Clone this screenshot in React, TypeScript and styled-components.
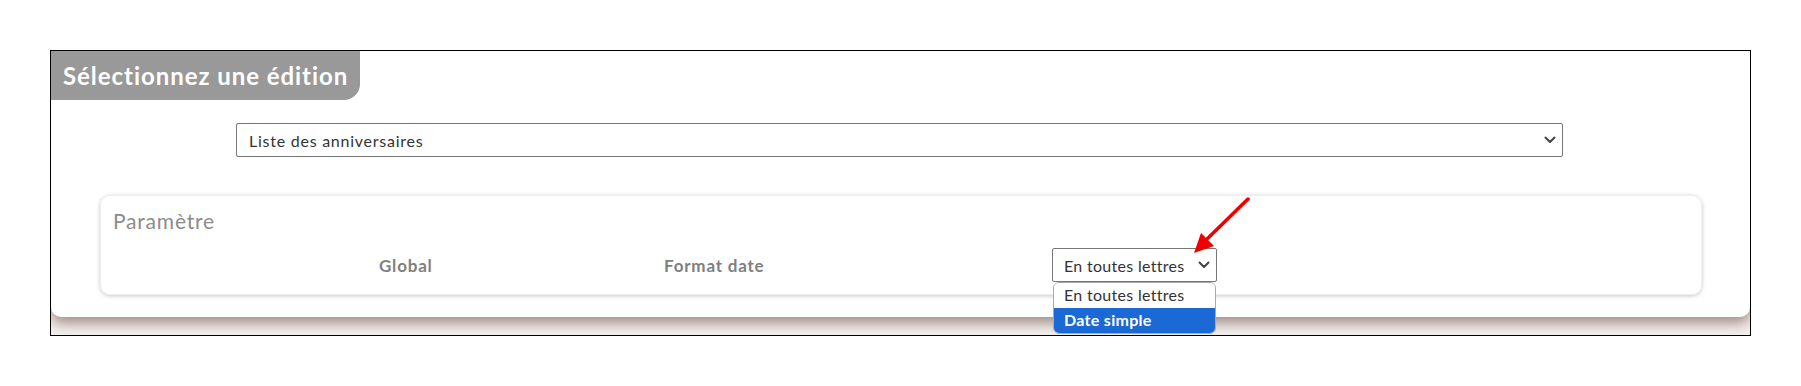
import styled, { createGlobalStyle } from 'styled-components';

const GlobalStyle = createGlobalStyle`
  html, body {
    margin: 0;
    padding: 0;
    background: #ffffff;
  }
  body {
    font-family: 'Lato', 'Open Sans', sans-serif;
  }
`;

const Page = styled.div`
  padding: 50px 0 0 50px;
`;

const Frame = styled.div`
  position: relative;
  width: 1699px;
  height: 284px;
  border: 1px solid #000;
  overflow: hidden;
  background: #f4f1ef;
`;

const Card = styled.section`
  background: #fff;
  border-radius: 0 0 10px 10px;
  padding-bottom: 22px;
  box-shadow: 0 6px 14px rgba(110, 80, 70, 0.65);
`;

const TitleTab = styled.h2`
  margin: 0;
  display: inline-flex;
  align-items: center;
  height: 49px;
  padding: 0 14px 0 12px;
  width: 283px;
  background: #999999;
  color: #fff;
  font-size: 24px;
  font-weight: 700;
  letter-spacing: 0.95px;
  white-space: nowrap;
  border-bottom-right-radius: 16px;
`;

const SelectBox = styled.div<{ $width?: string }>`
  display: flex;
  align-items: center;
  justify-content: space-between;
  box-sizing: border-box;
  height: 34px;
  width: ${p => p.$width || 'auto'};
  padding: 0 6px 0 11px;
  border: 1px solid #767676;
  border-radius: 2px;
  background: #fff;
  color: #333;
  font-size: 16px;
  letter-spacing: 0.3px;
  white-space: nowrap;
`;

const MainSelect = styled(SelectBox)`
  margin: 23px 187px 0 185px;
  padding-left: 12px;
  letter-spacing: 0.75px;
`;

const Chevron = () => (
  <svg width="12" height="8" viewBox="0 0 12 8" fill="none">
    <path d="M1.5 1.5 L6 6 L10.5 1.5" stroke="#444" strokeWidth="2" strokeLinecap="round" strokeLinejoin="round" />
  </svg>
);

const Panel = styled.div`
  margin: 38px 48px 0 49px;
  height: 100px;
  box-sizing: border-box;
  padding: 12px 12px 0 12px;
  border: 1px solid #eeeeee;
  border-radius: 10px;
  box-shadow: 0 1px 4px rgba(0, 0, 0, 0.22);
`;

const PanelTitle = styled.div`
  color: #8c8c8c;
  font-size: 21px;
  letter-spacing: 0.8px;
  height: 28px;
`;

const ParamRow = styled.div`
  display: grid;
  grid-template-columns: 285px 388px 165px;
  align-items: center;
  margin-top: 12px;
  padding-left: 266px;
`;

const Label = styled.span`
  color: #808080;
  font-size: 17px;
  font-weight: 700;
  letter-spacing: 0.8px;
`;

const SelectWrap = styled.div`
  position: relative;
`;

const OptionList = styled.ul`
  position: absolute;
  top: 34px;
  left: 1px;
  width: 163px;
  margin: 0;
  padding: 0;
  list-style: none;
  box-sizing: border-box;
  background: #fff;
  border: 1px solid #a9a9a9;
  border-radius: 6px;
  overflow: hidden;
  z-index: 2;
`;

const Option = styled.li<{ $active?: boolean }>`
  height: 25px;
  line-height: 24px;
  padding-left: 10px;
  font-size: 16px;
  letter-spacing: 0.3px;
  white-space: nowrap;
  font-weight: ${p => (p.$active ? 700 : 400)};
  color: ${p => (p.$active ? '#fff' : '#333')};
  background: ${p => (p.$active ? '#1a69d4' : '#fff')};
`;

const Arrow = styled.svg`
  position: absolute;
  left: 1141px;
  top: 146px;
  z-index: 3;
`;

export default function App() {
  return (
    <>
      <GlobalStyle />
      <Page>
        <Frame>
          <Card>
            <TitleTab>Sélectionnez une édition</TitleTab>
            <MainSelect>
              <span>Liste des anniversaires</span>
              <Chevron />
            </MainSelect>
            <Panel>
              <PanelTitle>Paramètre</PanelTitle>
              <ParamRow>
                <Label>Global</Label>
                <Label>Format date</Label>
                <SelectWrap>
                  <SelectBox $width="165px">
                    <span>En toutes lettres</span>
                    <Chevron />
                  </SelectBox>
                  <OptionList>
                    <Option>En toutes lettres</Option>
                    <Option $active>Date simple</Option>
                  </OptionList>
                </SelectWrap>
              </ParamRow>
            </Panel>
          </Card>
          <Arrow width="60" height="60" viewBox="0 0 60 60">
            <line x1="56" y1="2" x2="14" y2="43" stroke="#ee0000" strokeWidth="3.5" strokeLinecap="round" />
            <polygon points="2,56 9,36 22,49" fill="#ee0000" />
          </Arrow>
        </Frame>
      </Page>
    </>
  );
}
